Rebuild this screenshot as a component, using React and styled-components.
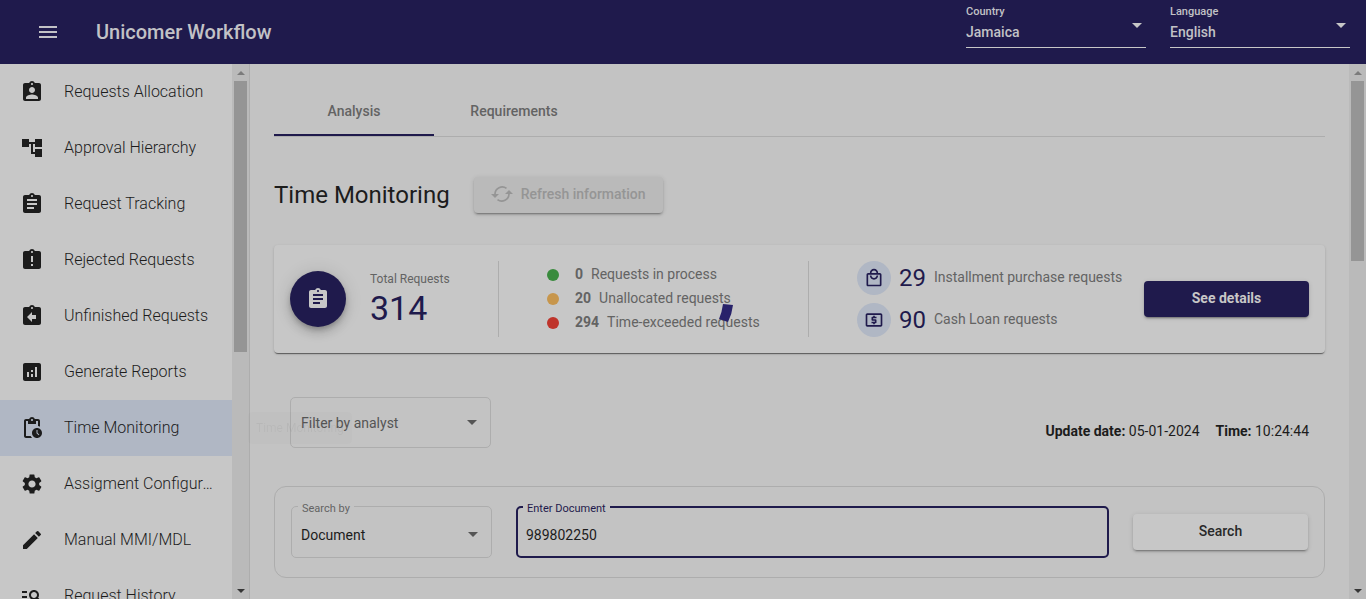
import React from "react";
import styled, { createGlobalStyle } from "styled-components";
import {
  MdMenu, MdAssignmentInd, MdAccountTree, MdAssignment, MdAssignmentLate, MdAssignmentReturn,
  MdAnalytics, MdOutlinePendingActions, MdSettings, MdEdit, MdManageSearch,
  MdOutlineLocalMall, MdOutlineLocalAtm,
} from "react-icons/md";

const navy = "#1f1a4c";
const surface = "#c7c7c7";
const ground = "#c3c3c3";
const line = "#adadad";
const ink = "#1c1c1c";
const muted = "#636363";
const tint = "#b0b7c4";

const GlobalStyle = createGlobalStyle`
  * { box-sizing: border-box; }
  body { margin: 0; background: ${ground}; color: ${ink}; font-family: Roboto, "Liberation Sans", sans-serif; font-size: 14px; line-height: 20px; }
  button, input, select { font: inherit; color: inherit; }
  h1, h2, p, ul { margin: 0; padding: 0; }
`;

const Page = styled.div`
  display: flex;
  flex-direction: column;
  height: 100vh;
  overflow: hidden;
`;

const Header = styled.header`
  display: flex;
  align-items: center;
  flex: none;
  height: 64px;
  padding: 0 16px 0 36px;
  background: ${navy};
  color: #c2c2c6;
`;

const MenuButton = styled.button`
  display: flex;
  padding: 0;
  border: 0;
  background: none;
`;

const Brand = styled.h1`
  flex: 1;
  margin-left: 36px;
  font-size: 20px;
  font-weight: 500;
  line-height: 32px;
`;

const HeaderFields = styled.div`
  display: flex;
  gap: 24px;
  align-self: flex-start;
`;

const HeaderField = styled.label`
  display: flex;
  flex-direction: column;
  width: 180px;
  height: 48px;
  padding-top: 4px;
  border-bottom: 1px solid #c7c7c7;
  font-size: 11px;
  font-weight: 500;
  line-height: 16px;
`;

const SelectBox = styled.span`
  display: flex;
  align-items: center;
`;

const PlainSelect = styled.select`
  flex: 1;
  min-width: 0;
  appearance: none;
  padding: 0;
  border: 0;
  outline: 0;
  background: none;
  font-size: 14px;
  font-weight: ${(p) => p.$weight || 400};
  line-height: 24px;
`;

const Caret = styled.span`
  flex: none;
  margin: 0 4px 0 0;
  border: 5px solid transparent;
  border-top-color: currentColor;
  border-bottom: 0;
  color: ${(p) => p.$color || "#555555"};
  ${(p) => p.$raised && "align-self: flex-start; margin-top: 3px;"}
`;

const Body = styled.div`
  display: flex;
  flex: 1;
  min-height: 0;
`;

const Sidebar = styled.nav`
  display: flex;
  flex: none;
  width: 250px;
  border-right: 1px solid ${line};
  background: ${surface};
`;

const NavList = styled.ul`
  flex: 1;
  min-width: 0;
  overflow: hidden;
  list-style: none;
`;

const NavLink = styled.a`
  display: flex;
  align-items: center;
  gap: 20px;
  height: 56px;
  padding: 0 16px 0 20px;
  background: ${(p) => (p.$active ? tint : "none")};
  color: ${ink};
  font-size: 16px;
  font-weight: 300;
  text-decoration: none;
`;

const NavIcon = styled.span`
  display: flex;
  flex: none;
  font-size: 24px;
`;

const NavText = styled.span`
  overflow: hidden;
  text-overflow: ellipsis;
  white-space: nowrap;
  line-height: 24px;
`;

const Track = styled.div`
  display: flex;
  flex-direction: column;
  flex: none;
  width: 17px;
  background: #bababa;
`;

const Arrow = styled.span`
  display: flex;
  align-items: center;
  justify-content: center;
  flex: none;
  height: 17px;
  &::before {
    content: "";
    border: 4px solid transparent;
    ${(p) => (p.$up ? "border-top: 0; border-bottom-color: #7b7b7b;" : "border-bottom: 0; border-top-color: #363636;")}
  }
`;

const Rail = styled.span`
  flex: 1;
  min-height: 0;
`;

const Thumb = styled.span`
  display: block;
  height: ${(p) => p.$length}%;
  margin: 0 2px;
  background: #959595;
`;

const Main = styled.main`
  flex: 1;
  min-width: 0;
  overflow: hidden;
  padding: 24px 24px 0;
`;

const Tabs = styled.div`
  display: flex;
  height: 49px;
  border-bottom: 1px solid ${line};
`;

const Tab = styled.button`
  width: 160px;
  padding: 0;
  border: 0;
  border-bottom: 2px solid ${(p) => (p.$active ? navy : "transparent")};
  background: none;
  color: ${muted};
  font-weight: 500;
`;

const TitleRow = styled.div`
  display: flex;
  align-items: center;
  gap: 24px;
  margin: 40px 0 32px;
`;

const Title = styled.h2`
  font-size: 24px;
  font-weight: 400;
  line-height: 32px;
`;

const Button = styled.button`
  display: flex;
  align-items: center;
  justify-content: center;
  gap: 8px;
  flex: none;
  width: ${(p) => p.$width}px;
  height: 36px;
  padding: 0 0 2px;
  border: 0;
  border-radius: 4px;
  background: ${(p) => (p.$primary ? navy : surface)};
  color: ${(p) => (p.$primary ? "#c7c7c7" : "#292929")};
  font-weight: ${(p) => (p.$primary ? 700 : 500)};
  box-shadow: 0 3px 1px -2px rgba(0, 0, 0, 0.2), 0 2px 2px rgba(0, 0, 0, 0.14), 0 1px 5px rgba(0, 0, 0, 0.12);
  &:disabled { background: #bababa; color: #959595; }
`;

const Summary = styled.section`
  display: flex;
  align-items: center;
  height: 108px;
  padding: 0 16px;
  border-radius: 4px;
  background: ${surface};
  box-shadow: 0 2px 1px -1px rgba(0, 0, 0, 0.4), 0 1px 1px rgba(0, 0, 0, 0.14), 0 1px 3px rgba(0, 0, 0, 0.12);
`;

const Badge = styled.span`
  display: flex;
  align-items: center;
  justify-content: center;
  flex: none;
  width: 56px;
  height: 56px;
  border-radius: 50%;
  background: ${navy};
  color: ${surface};
  font-size: 24px;
  box-shadow: 0 3px 5px -1px rgba(0, 0, 0, 0.2), 0 6px 10px rgba(0, 0, 0, 0.14), 0 1px 18px rgba(0, 0, 0, 0.12);
`;

const Total = styled.div`
  width: 128px;
  margin-left: 24px;
  padding-bottom: 2px;
  color: ${muted};
  font-size: 12px;
`;

const TotalValue = styled.p`
  color: ${navy};
  font-size: 34px;
  line-height: 38px;
`;

const Section = styled.div`
  display: flex;
  flex-direction: column;
  justify-content: center;
  gap: ${(p) => p.$gap}px;
  flex: ${(p) => p.$grow} 1 0;
  height: 76px;
  padding-left: 48px;
  border-left: 1px solid ${line};
  white-space: nowrap;
`;

const Status = styled.p`
  display: flex;
  align-items: center;
  gap: 8px;
  height: 24px;
  color: ${muted};
  line-height: 20px;
`;

const StatusText = styled.span`
  display: flex;
  gap: 8px;
  padding-bottom: 2px;
`;

const Dot = styled.span`
  width: 12px;
  height: 12px;
  margin-right: 8px;
  border-radius: 50%;
  background: ${(p) => p.$color};
`;

const Kind = styled.p`
  display: flex;
  align-items: center;
  gap: 8px;
  color: ${muted};
`;

const KindIcon = styled.span`
  display: flex;
  align-items: center;
  justify-content: center;
  width: 34px;
  height: 34px;
  border-radius: 50%;
  background: ${tint};
  color: ${navy};
  font-size: 20px;
`;

const KindValue = styled.span`
  color: ${navy};
  font-size: 24px;
`;

const KindText = styled.span`
  padding-bottom: 2px;
`;

const FilterRow = styled.div`
  display: flex;
  align-items: center;
  justify-content: space-between;
  margin: 44px 16px 38px;
`;

const Updated = styled.p`
  display: flex;
  gap: 16px;
  padding-top: 16px;
`;

const Field = styled.div`
  display: flex;
  align-items: center;
  width: 201px;
  height: 51px;
  padding: 0 9px 0 10px;
  border: 1px solid ${line};
  border-radius: 5px;
  color: #555555;
`;

const LabelledField = styled.fieldset`
  display: flex;
  align-items: center;
  flex: 1;
  min-width: 0;
  height: 61px;
  margin: 0;
  padding: ${(p) => (p.$focused ? "0 8px 2px" : "0 9px 4px")};
  border: ${(p) => (p.$focused ? `2px solid ${navy}` : `1px solid ${line}`)};
  border-radius: 5px;
`;

const Legend = styled.legend`
  margin-left: -3px;
  padding: 4px 4px 0;
  color: ${(p) => (p.$focused ? navy : muted)};
  font-size: 11px;
  line-height: 16px;
`;

const TextInput = styled.input`
  flex: 1;
  min-width: 0;
  height: 24px;
  padding: 0;
  border: 0;
  outline: 0;
  background: none;
`;

const SearchPanel = styled.form`
  display: flex;
  align-items: center;
  gap: 24px;
  height: 92px;
  padding: 0 16px;
  border: 1px solid ${line};
  border-radius: 12px;
`;

const FieldSlot = styled.div`
  display: flex;
  flex: ${(p) => (p.$width ? "none" : "1")};
  width: ${(p) => (p.$width ? p.$width + "px" : "auto")};
  min-width: 0;
  margin-bottom: 10px;
`;

const Spinner = styled.svg`
  position: fixed;
  top: 50%;
  left: 50%;
  width: 112px;
  height: 112px;
  transform: translate(-50%, -50%);
  pointer-events: none;
`;

const Tooltip = styled.div`
  position: fixed;
  top: 412px;
  left: 248px;
  padding: 6px 8px;
  border-radius: 4px;
  background: rgba(0, 0, 0, 0.01);
  color: rgba(0, 0, 0, 0.05);
  font-size: 12px;
  pointer-events: none;
`;

const navItems = [
  ["Requests Allocation", MdAssignmentInd],
  ["Approval Hierarchy", MdAccountTree],
  ["Request Tracking", MdAssignment],
  ["Rejected Requests", MdAssignmentLate],
  ["Unfinished Requests", MdAssignmentReturn],
  ["Generate Reports", MdAnalytics],
  ["Time Monitoring", MdOutlinePendingActions],
  ["Assigment Configuration", MdSettings],
  ["Manual MMI/MDL", MdEdit],
  ["Request History", MdManageSearch],
];

const statuses = [
  ["#398b3d", "0", "Requests in process"],
  ["#c7964c", "20", "Unallocated requests"],
  ["#bf342b", "294", "Time-exceeded requests"],
];

const kinds = [
  [MdOutlineLocalMall, "29", "Installment purchase requests"],
  [MdOutlineLocalAtm, "90", "Cash Loan requests"],
];

function Scrollbar({ length }) {
  return (
    <Track aria-hidden="true">
      <Arrow $up />
      <Rail><Thumb $length={length} /></Rail>
      <Arrow />
    </Track>
  );
}

function HeaderSelect({ label, value }) {
  return (
    <HeaderField>
      {label}
      <SelectBox>
        <PlainSelect $weight={500} defaultValue={value}><option>{value}</option></PlainSelect>
        <Caret $color="#c7c7c7" $raised />
      </SelectBox>
    </HeaderField>
  );
}

function RefreshIcon() {
  return (
    <svg width="22" height="18" viewBox="0 0 22 18" fill="none" stroke="currentColor" strokeWidth="1.7">
      <path d="M4 9A7.200 7.200 0 0 1 15.500 3.400M18 9A7.200 7.200 0 0 1 6.500 14.600" />
      <path d="M0 9h8L4 13zM14 9h8L18 5z" fill="currentColor" stroke="none" />
    </svg>
  );
}

export default function App() {
  return (
    <Page>
      <GlobalStyle />
      <Header>
        <MenuButton aria-label="Menu"><MdMenu size={24} /></MenuButton>
        <Brand>Unicomer Workflow</Brand>
        <HeaderFields>
          <HeaderSelect label="Country" value="Jamaica" />
          <HeaderSelect label="Language" value="English" />
        </HeaderFields>
      </Header>
      <Body>
        <Sidebar>
          <NavList>
            {navItems.map(([text, Icon]) => (
              <li key={text}>
                <NavLink href="#" $active={text === "Time Monitoring"}>
                  <NavIcon><Icon /></NavIcon>
                  <NavText>{text}</NavText>
                </NavLink>
              </li>
            ))}
          </NavList>
          <Scrollbar length={54} />
        </Sidebar>
        <Main>
          <Tabs role="tablist">
            <Tab role="tab" aria-selected="true" $active>Analysis</Tab>
            <Tab role="tab" aria-selected="false">Requirements</Tab>
          </Tabs>
          <TitleRow>
            <Title>Time Monitoring</Title>
            <Button $width={189} disabled><RefreshIcon />Refresh information</Button>
          </TitleRow>
          <Summary>
            <Badge><MdAssignment /></Badge>
            <Total>
              <p>Total Requests</p>
              <TotalValue>314</TotalValue>
            </Total>
            <Section $gap={0} $grow={10}>
              {statuses.map(([color, count, text]) => (
                <Status key={text}><Dot $color={color} /><StatusText><b>{count}</b>{text}</StatusText></Status>
              ))}
            </Section>
            <Section $gap={8} $grow={11}>
              {kinds.map(([Icon, count, text]) => (
                <Kind key={text}><KindIcon><Icon /></KindIcon><KindValue>{count}</KindValue><KindText>{text}</KindText></Kind>
              ))}
            </Section>
            <Button $width={165} $primary>See details</Button>
          </Summary>
          <FilterRow>
            <Field>
              <PlainSelect aria-label="Filter by analyst" defaultValue="Filter by analyst"><option>Filter by analyst</option></PlainSelect>
              <Caret />
            </Field>
            <Updated>
              <span><b>Update date:</b> 05-01-2024</span>
              <span><b>Time:</b> 10:24:44</span>
            </Updated>
          </FilterRow>
          <SearchPanel onSubmit={(e) => e.preventDefault()}>
            <FieldSlot $width={201}>
              <LabelledField>
                <Legend><label htmlFor="search-by">Search by</label></Legend>
                <PlainSelect id="search-by" defaultValue="Document"><option>Document</option></PlainSelect>
                <Caret />
              </LabelledField>
            </FieldSlot>
            <FieldSlot>
              <LabelledField $focused>
                <Legend $focused><label htmlFor="document">Enter Document</label></Legend>
                <TextInput id="document" defaultValue="989802250" />
              </LabelledField>
            </FieldSlot>
            <Button $width={175}>Search</Button>
          </SearchPanel>
        </Main>
        <Scrollbar length={36} />
      </Body>
      <Tooltip role="tooltip">Time Monitoring</Tooltip>
      <Spinner viewBox="0 0 112 112" role="img" aria-label="Loading">
        <path d="M96 60L106 61Q105 70 101 78L92 75Q95 68 96 60z" fill="#28226a" />
      </Spinner>
    </Page>
  );
}
